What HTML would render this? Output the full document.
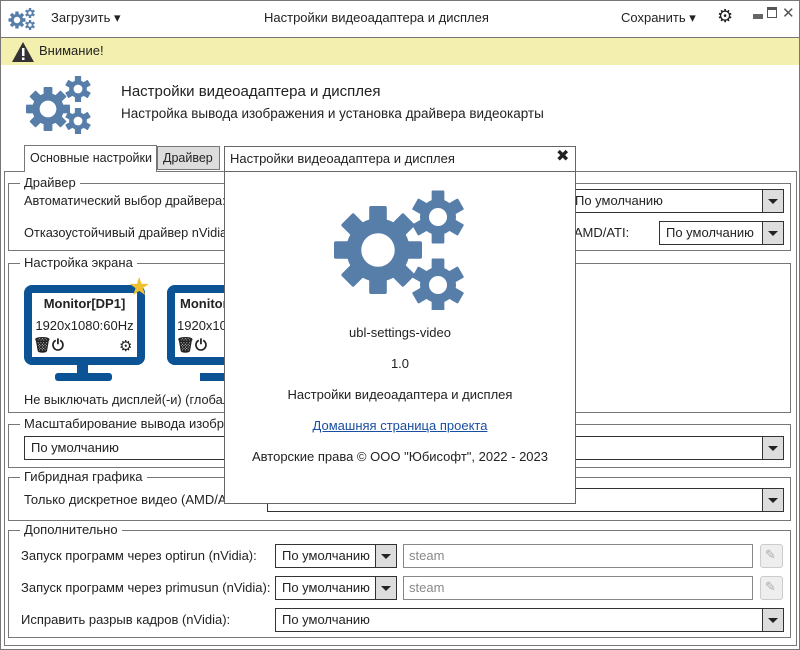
<!DOCTYPE html>
<html><head><meta charset="utf-8"><style>
*{box-sizing:border-box;margin:0;padding:0}
body{width:800px;height:650px;overflow:hidden;background:#fff;font-family:"Liberation Sans","DejaVu Sans",sans-serif;font-size:13px;color:#222;position:relative}
.a{position:absolute}
.t{position:absolute;white-space:nowrap;line-height:16px}
.box{position:absolute;border:1px solid #777}
.gt{position:absolute;background:#fff;padding:0 4px;line-height:14px;white-space:nowrap}
.cb{position:absolute;border:1px solid #333;background:#fff;height:24px;line-height:22px;padding-left:6px;white-space:nowrap}
.cb .ar{position:absolute;right:0;top:0;width:21px;height:22px;border-left:1px solid #333;background:#ddd}
.cb .ar:after{content:"";position:absolute;left:5px;top:9px;border-left:5px solid transparent;border-right:5px solid transparent;border-top:5px solid #222}
.en{position:absolute;border:1px solid #888;height:24px;line-height:22px;padding-left:5px;color:#888;background:#fff}
.bt{position:absolute;width:23px;height:24px;border:1px solid #ccc;border-radius:3px;background:#eee}
</style></head><body>
<svg width="0" height="0" style="position:absolute"><defs>
<g id="gear"><circle r="36" fill="#577ea9"/>
<g fill="#577ea9"><rect x="-10" y="-50" width="20" height="20" rx="2"/><rect x="-10" y="-50" width="20" height="20" rx="2" transform="rotate(45)"/><rect x="-10" y="-50" width="20" height="20" rx="2" transform="rotate(90)"/><rect x="-10" y="-50" width="20" height="20" rx="2" transform="rotate(135)"/><rect x="-10" y="-50" width="20" height="20" rx="2" transform="rotate(180)"/><rect x="-10" y="-50" width="20" height="20" rx="2" transform="rotate(225)"/><rect x="-10" y="-50" width="20" height="20" rx="2" transform="rotate(270)"/><rect x="-10" y="-50" width="20" height="20" rx="2" transform="rotate(315)"/></g>
<circle r="19" fill="#fff"/></g>
<g id="gear6"><circle r="34" fill="#577ea9"/>
<g fill="#577ea9"><rect x="-12" y="-50" width="24" height="22" rx="2"/><rect x="-12" y="-50" width="24" height="22" rx="2" transform="rotate(60)"/><rect x="-12" y="-50" width="24" height="22" rx="2" transform="rotate(120)"/><rect x="-12" y="-50" width="24" height="22" rx="2" transform="rotate(180)"/><rect x="-12" y="-50" width="24" height="22" rx="2" transform="rotate(240)"/><rect x="-12" y="-50" width="24" height="22" rx="2" transform="rotate(300)"/></g>
<circle r="17" fill="#fff"/></g>
</defs></svg>
<div class="a" style="left:0;top:0;width:800px;height:650px;border:1px solid #777"></div>
<!-- header -->
<svg class="a" style="left:8px;top:6px" width="28" height="24"><use href="#gear" transform="translate(9,14) scale(0.17)"/><use href="#gear6" transform="translate(22,7) scale(0.1)"/><use href="#gear6" transform="translate(22,19) scale(0.1)"/></svg>
<div class="t" style="left:51px;top:10px">Загрузить ▾</div>
<div class="t" style="left:264px;top:10px">Настройки видеоадаптера и дисплея</div>
<div class="t" style="left:621px;top:10px">Сохранить ▾</div>
<div class="t" style="left:717px;top:8px;font-size:18px">⚙</div>
<div class="a" style="left:753px;top:14px;width:10px;height:5px;background:#666"></div>
<div class="a" style="left:767px;top:7px;width:10px;height:11px;border:1px solid #555;border-top:3px solid #555"></div>
<div class="t" style="left:782px;top:6px;font-size:15px;color:#555">✕</div>
<div class="a" style="left:1px;top:37px;width:798px;height:1px;background:#777"></div>
<div class="a" style="left:1px;top:38px;width:798px;height:27px;background:#f3efae"></div>
<svg class="a" style="left:11px;top:41px" width="24" height="22"><path d="M12 1 L23 21 L1 21Z" fill="#333"/><rect x="11" y="7" width="2.5" height="8" fill="#fff"/><rect x="11" y="16.5" width="2.5" height="2.5" fill="#fff"/></svg>
<div class="t" style="left:39px;top:43px">Внимание!</div>
<!-- banner -->
<svg class="a" style="left:26px;top:72px" width="68" height="66"><use href="#gear" transform="translate(22,37) scale(0.44)"/><use href="#gear6" transform="translate(52,17) scale(0.26)"/><use href="#gear6" transform="translate(52,49) scale(0.26)"/></svg>
<div class="t" style="left:121px;top:84px;font-size:15px">Настройки видеоадаптера и дисплея</div>
<div class="t" style="left:121px;top:106px;font-size:13.5px">Настройка вывода изображения и установка драйвера видеокарты</div>
<!-- tabs -->
<div class="a" style="left:24px;top:145px;width:133px;height:27px;border:1px solid #777;border-bottom:none;background:#fff"></div>
<div class="t" style="left:30px;top:150px;font-size:12.5px">Основные настройки</div>
<div class="a" style="left:157px;top:146px;width:63px;height:24px;border:1px solid #777;background:#ddd"></div>
<div class="t" style="left:163px;top:150px;font-size:12.5px">Драйвер</div>
<div class="a" style="left:4px;top:171px;width:793px;height:475px;border:1px solid #777;border-top:none"></div>
<div class="a" style="left:4px;top:171px;width:20px;height:1px;background:#777"></div>
<div class="a" style="left:157px;top:171px;width:640px;height:1px;background:#777"></div>
<!-- Драйвер -->
<div class="box" style="left:8px;top:183px;width:783px;height:68px"></div>
<div class="gt" style="left:20px;top:176px">Драйвер</div>
<div class="t" style="left:24px;top:193px;font-size:12.8px">Автоматический выбор драйвера:</div>
<div class="cb" style="left:568px;top:189px;width:216px">По умолчанию<div class="ar"></div></div>
<div class="t" style="left:24px;top:225px;font-size:12.8px">Отказоустойчивый драйвер nVidia</div>
<div class="t" style="left:563px;top:225px">р AMD/ATI:</div>
<div class="cb" style="left:659px;top:221px;width:125px">По умолчанию<div class="ar"></div></div>
<!-- экран -->
<div class="box" style="left:8px;top:263px;width:783px;height:150px"></div>
<div class="gt" style="left:20px;top:256px">Настройка экрана</div>
<div class="a" style="left:24px;top:285px;width:121px;height:80px;border:8px solid #0b5394;border-radius:8px;background:#fff"></div>
<div class="a" style="left:77px;top:364px;width:11px;height:9px;background:#0b5394"></div>
<div class="a" style="left:55px;top:373px;width:57px;height:8px;border-radius:3px;background:#0b5394"></div>
<div class="t" style="left:24px;top:296px;width:121px;text-align:center;font-weight:bold">Monitor[DP1]</div>
<div class="t" style="left:24px;top:318px;width:121px;text-align:center">1920x1080:60Hz</div>
<div class="t" style="left:33px;top:338px;font-size:15px;font-weight:bold">🗑⏻</div>
<div class="t" style="left:119px;top:339px;font-size:15px">⚙</div>
<div class="t" style="left:128px;top:273px;font-size:25px;color:#f0c030;line-height:28px">★</div>
<div class="a" style="left:167px;top:285px;width:60px;height:80px;border:8px solid #0b5394;border-right:none;border-radius:8px 0 0 8px;background:#fff"></div>
<div class="a" style="left:200px;top:373px;width:30px;height:8px;background:#0b5394"></div>
<div class="t" style="left:180px;top:296px;font-weight:bold">Monitor</div>
<div class="t" style="left:177px;top:318px">1920x10</div>
<div class="t" style="left:176px;top:338px;font-size:15px;font-weight:bold">🗑⏻</div>
<div class="t" style="left:24px;top:392px;font-size:12.8px">Не выключать дисплей(-и) (глобал</div>
<!-- Масштаб -->
<div class="box" style="left:8px;top:424px;width:783px;height:44px"></div>
<div class="gt" style="left:20px;top:417px">Масштабирование вывода изображ</div>
<div class="cb" style="left:24px;top:436px;width:760px">По умолчанию<div class="ar"></div></div>
<!-- Гибрид -->
<div class="box" style="left:8px;top:477px;width:783px;height:44px"></div>
<div class="gt" style="left:20px;top:470px">Гибридная графика</div>
<div class="t" style="left:24px;top:492px">Только дискретное видео (AMD/A</div>
<div class="cb" style="left:267px;top:488px;width:517px"><div class="ar"></div></div>
<!-- Доп -->
<div class="box" style="left:8px;top:530px;width:783px;height:108px"></div>
<div class="gt" style="left:20px;top:523px">Дополнительно</div>
<div class="t" style="left:21px;top:548px">Запуск программ через optirun (nVidia):</div>
<div class="cb" style="left:275px;top:544px;width:122px">По умолчанию<div class="ar"></div></div>
<div class="en" style="left:403px;top:544px;width:350px">steam</div>
<div class="bt" style="left:760px;top:544px"></div>
<div class="t" style="left:765px;top:547px;color:#aaa">✎</div>
<div class="t" style="left:21px;top:580px">Запуск программ через primusun (nVidia):</div>
<div class="cb" style="left:275px;top:576px;width:122px">По умолчанию<div class="ar"></div></div>
<div class="en" style="left:403px;top:576px;width:350px">steam</div>
<div class="bt" style="left:760px;top:576px"></div>
<div class="t" style="left:765px;top:579px;color:#aaa">✎</div>
<div class="t" style="left:21px;top:612px">Исправить разрыв кадров (nVidia):</div>
<div class="cb" style="left:275px;top:608px;width:509px">По умолчанию<div class="ar"></div></div>
<!-- dialog -->
<div class="a" style="left:224px;top:146px;width:352px;height:358px;border:1px solid #666;background:#fff"></div>
<div class="a" style="left:224px;top:171px;width:352px;height:1px;background:#666"></div>
<div class="t" style="left:230px;top:151px">Настройки видеоадаптера и дисплея</div>
<div class="t" style="left:556px;top:149px;font-size:16px;font-weight:bold">✖</div>
<svg class="a" style="left:334px;top:190px" width="130" height="120"><use href="#gear" transform="translate(44,60) scale(0.88)"/><use href="#gear6" transform="translate(104,27) scale(0.53)"/><use href="#gear6" transform="translate(104,95) scale(0.53)"/></svg>
<div class="t" style="left:224px;top:325px;width:352px;text-align:center">ubl-settings-video</div>
<div class="t" style="left:224px;top:356px;width:352px;text-align:center">1.0</div>
<div class="t" style="left:224px;top:387px;width:352px;text-align:center">Настройки видеоадаптера и дисплея</div>
<div class="t" style="left:224px;top:418px;width:352px;text-align:center;color:#1a4ea0;text-decoration:underline">Домашняя страница проекта</div>
<div class="t" style="left:224px;top:449px;width:352px;text-align:center">Авторские права © ООО "Юбисофт", 2022 - 2023</div>
</body></html>
